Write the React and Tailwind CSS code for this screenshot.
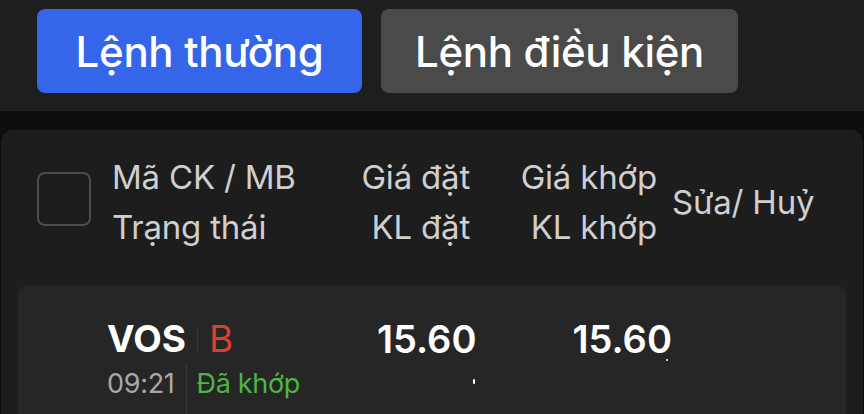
import React from 'react';

const font = { fontFamily: 'Inter, "Noto Sans", sans-serif' };

const App = () => {
  return (
    <div className="w-[864px] h-[414px] overflow-hidden bg-[#0d0d0d]" style={font}>
      {/* Tabs */}
      <div className="flex gap-[19px] bg-[#1e1e1e] px-[37px] pt-[9px] pb-[18px]">
        <button className="flex h-[84px] w-[325px] items-center justify-center rounded-[8px] bg-[#3566ea] text-[42px] font-medium tracking-[-0.3px] text-white">
          Lệnh thường
        </button>
        <button className="flex h-[84px] w-[357px] items-center justify-center rounded-[8px] bg-[#4a4a4a] text-[42px] font-medium tracking-[-0.3px] text-white">
          Lệnh điều kiện
        </button>
      </div>

      {/* Order list */}
      <div className="mx-[1px] mt-[19px] rounded-t-[12px] bg-[#1d1d1d] pb-10">
        {/* Header */}
        <div className="flex items-center pl-[36px] pt-[22px] text-[33px] leading-[50px] tracking-[-0.2px] text-[#cfcfcf]">
          <div className="h-[54px] w-[54px] -mt-[6px] rounded-[8px] border-2 border-[#4c4c4c]" />
          <div className="ml-[21px] w-[240px]">
            <div>Mã CK / MB</div>
            <div>Trạng thái</div>
          </div>
          <div className="w-[118px] text-right">
            <div>Giá đặt</div>
            <div>KL đặt</div>
          </div>
          <div className="w-[187px] text-right">
            <div>Giá khớp</div>
            <div>KL khớp</div>
          </div>
          <div className="ml-[15px]">Sửa/ Huỷ</div>
        </div>

        {/* Row */}
        <div className="mx-[17px] mt-[33px] h-[160px] rounded-[10px] bg-[#262626] pl-[89px] pt-[34px]">
          <div className="flex">
            <div className="w-[270px]">
              <div className="flex h-[40px] items-center text-[37px] leading-[40px]">
                <span className="font-bold text-white">VOS</span>
                <span className="ml-[11px] mr-[11px] h-[26px] w-px bg-[#3a3a3a]" />
                <span className="text-[#d8412f]">B</span>
              </div>
              <div className="mt-[5px] flex items-start text-[27px] leading-[40px] tracking-[-0.3px]">
                <span className="text-[#a9a9a9]">09:21</span>
                <span className="ml-[11px] mr-[10px] h-[60px] w-px bg-[#3a3a3a]" />
                <span className="text-[#4fb543]">Đã khớp</span>
              </div>
            </div>
            <div className="w-[98px] text-right">
              <div className="text-[38px] font-semibold leading-[40px] text-white">15.60</div>
              <div className="mt-[20px] flex justify-end">
                <span className="h-[5px] w-[2px] rounded-full bg-white" />
              </div>
            </div>
            <div className="w-[197px] text-right">
              <div className="text-[38px] font-semibold leading-[40px] text-white">15.60</div>
              <div className="flex justify-end pr-[4px]">
                <span className="h-[2px] w-[2px] rounded-full bg-white" />
              </div>
            </div>
          </div>
        </div>
      </div>
    </div>
  );
};

export default App;
